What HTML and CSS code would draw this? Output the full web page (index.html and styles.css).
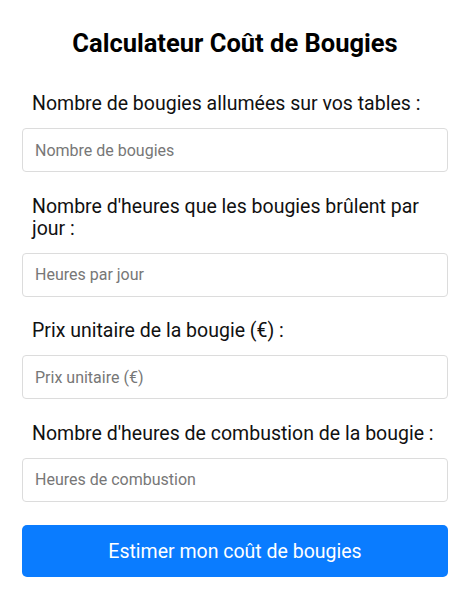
FILE: index.html
```html
<!DOCTYPE html>
<html lang="fr">
<head>
    <meta charset="UTF-8">
    <meta name="viewport" content="width=device-width, initial-scale=1.0">
    <title>Calculateur Coût de Bougies</title>
    <link rel="stylesheet" href="styles.css">
</head>
<body>
    <div class="calculator">
        <h1>Calculateur Coût de Bougies</h1>

        <form class="calc-form" onsubmit="return false;">
            <div class="field">
                <label for="nbBougies">Nombre de bougies allumées sur vos tables :</label>
                <input type="number" id="nbBougies" placeholder="Nombre de bougies">
            </div>

            <div class="field">
                <label for="heuresJour">Nombre d'heures que les bougies brûlent par jour :</label>
                <input type="number" id="heuresJour" placeholder="Heures par jour">
            </div>

            <div class="field">
                <label for="prixUnitaire">Prix unitaire de la bougie (€) :</label>
                <input type="number" id="prixUnitaire" placeholder="Prix unitaire (€)">
            </div>

            <div class="field">
                <label for="heuresCombustion">Nombre d'heures de combustion de la bougie :</label>
                <input type="number" id="heuresCombustion" placeholder="Heures de combustion">
            </div>

            <button type="submit" class="submit-btn">Estimer mon coût de bougies</button>
        </form>
    </div>
</body>
</html>
```

FILE: styles.css
```css
:root {
    --color-primary: #0a7cff;
    --color-border: #dcdcdc;
    --color-text: #111;
    --font-family-primary: Roboto, 'Noto Sans', Arial, sans-serif;
}

* {
    margin: 0;
    padding: 0;
    box-sizing: border-box;
}

body {
    font-family: var(--font-family-primary);
    background: #fff;
    color: var(--color-text);
}

.calculator {
    width: 426px;
    margin: 0 22px;
    padding-top: 28px;
}

h1 {
    font-size: 25.5px;
    font-weight: 700;
    text-align: center;
    color: #000;
    margin-bottom: 35px;
}

.field {
    margin-bottom: 23.5px;
}

.field label {
    display: block;
    font-size: 19.5px;
    line-height: 22px;
    padding: 0 10px;
    margin-bottom: 13px;
}

.field input {
    display: block;
    width: 100%;
    height: 44px;
    padding: 0 12px;
    font-family: inherit;
    font-size: 16px;
    color: var(--color-text);
    border: 1px solid var(--color-border);
    border-radius: 4px;
    outline: none;
    -moz-appearance: textfield;
}

.field input::placeholder {
    color: #777;
}

.field input::-webkit-outer-spin-button,
.field input::-webkit-inner-spin-button {
    -webkit-appearance: none;
    margin: 0;
}

.submit-btn {
    display: block;
    width: 100%;
    height: 52px;
    background: var(--color-primary);
    color: #fff;
    border: none;
    border-radius: 5px;
    font-family: inherit;
    font-size: 19.5px;
    cursor: pointer;
}

.submit-btn:hover {
    background: #006ae0;
}
```
